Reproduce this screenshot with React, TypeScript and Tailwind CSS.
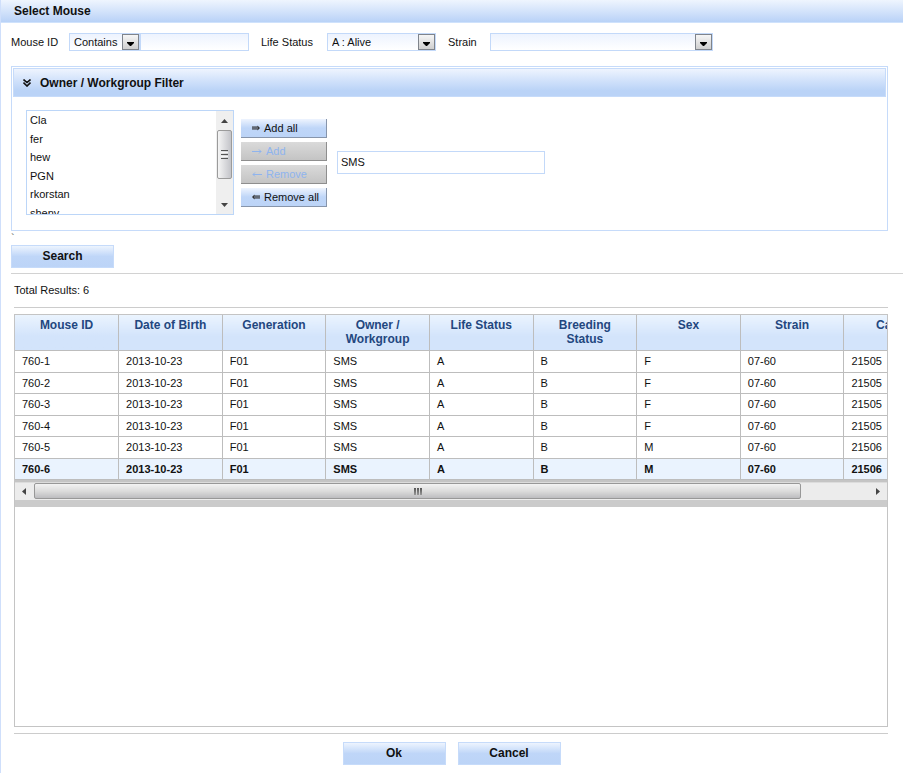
import type { ReactNode } from "react";
import clsx from "clsx";

const columns = [
  "Mouse ID",
  "Date of Birth",
  "Generation",
  "Owner / Workgroup",
  "Life Status",
  "Breeding Status",
  "Sex",
  "Strain",
  "Cage #",
];

const mice = [
  ["760-1", "2013-10-23", "F01", "SMS", "A", "B", "F", "07-60", "21505"],
  ["760-2", "2013-10-23", "F01", "SMS", "A", "B", "F", "07-60", "21505"],
  ["760-3", "2013-10-23", "F01", "SMS", "A", "B", "F", "07-60", "21505"],
  ["760-4", "2013-10-23", "F01", "SMS", "A", "B", "F", "07-60", "21505"],
  ["760-5", "2013-10-23", "F01", "SMS", "A", "B", "M", "07-60", "21506"],
  ["760-6", "2013-10-23", "F01", "SMS", "A", "B", "M", "07-60", "21506"],
];

const selectedMouse = "760-6";

const owners = ["Cla", "fer", "hew", "PGN", "rkorstan", "sheny"];

interface ComboBoxProps {
  id: string;
  label?: string;
  value: string;
  className: string;
}

function ComboBox({ id, label, value, className }: ComboBoxProps) {
  return (
    <div className={clsx("relative h-[18px]", className)}>
      <select
        id={id}
        aria-label={label}
        defaultValue={value}
        className="block h-full w-full appearance-none border border-[#c3d9f9] bg-gradient-to-b from-[#edf3fe] to-white pl-1 outline-none"
      >
        <option>{value}</option>
      </select>
      <span className="pointer-events-none absolute top-px right-px bottom-px flex w-[17px] items-center justify-center border border-[#7f848c] bg-gradient-to-b from-[#f6f6f6] to-[#cfcfcf]">
        <svg width="7" height="4" viewBox="0 0 7 4" className="mt-1">
          <path d="M0 0h7v1L4 4H3L0 1z" fill="#000" />
        </svg>
      </span>
    </div>
  );
}

interface MoveButtonProps {
  disabled?: boolean;
  icon: ReactNode;
  children: ReactNode;
}

function MoveButton({ disabled, icon, children }: MoveButtonProps) {
  return (
    <button
      type="button"
      disabled={disabled}
      className={clsx(
        "flex h-[19px] w-full items-center gap-1 border-r border-b pl-[11px]",
        disabled
          ? "border-[#8e8e8e] bg-gradient-to-b from-[#dadada] to-[#c4c4c4] text-[#8fb4ee]"
          : "border-[#8795ab] bg-gradient-to-b from-[#eef4fe] via-[#bfd6f8] to-[#bcd4f7] text-[#111]"
      )}
    >
      {icon}
      {children}
    </button>
  );
}

function DoubleArrow({ left }: { left?: boolean }) {
  return (
    <svg
      width="8"
      height="6"
      viewBox="0 0 8 6"
      className={clsx("mt-px", left && "rotate-180")}
    >
      <path d="M0 1.5h5.5V.5L8 3L5.5 5.5v-1H0z" fill="#333" />
      <path d="M0 3h6" stroke="#a9bddc" strokeWidth=".8" />
    </svg>
  );
}

function SingleArrow({ left }: { left?: boolean }) {
  return (
    <svg
      width="10"
      height="7"
      viewBox="0 0 10 7"
      className={clsx("mt-px", left && "rotate-180")}
    >
      <path d="M0 3.5h9M7 1.5L9 3.5L7 5.5" stroke="#8fb4ee" fill="none" />
    </svg>
  );
}

function PushButton({ children }: { children: ReactNode }) {
  return (
    <button
      type="button"
      className="h-[23px] w-[103px] border border-[#c6dbfa] bg-gradient-to-b from-[#edf4fe] via-[#bfd6f8] to-[#bcd4f7] pb-px text-xs font-bold text-[#111]"
    >
      {children}
    </button>
  );
}

function ListScrollbar() {
  return (
    <div className="flex w-[17px] flex-col items-center bg-[#efefef]" aria-hidden="true">
      <svg width="7" height="4" viewBox="0 0 7 4" className="mt-2">
        <path d="M3.5 0L7 4H0z" fill="#444" />
      </svg>
      <div className="mt-[7px] flex h-[49px] w-[15px] flex-col items-center justify-center gap-px rounded-xs border border-[#9b9b9b] bg-gradient-to-r from-[#f5f5f5] to-[#c3c4c9]">
        <span className="h-px w-[7px] bg-[#555]" />
        <span className="h-px w-[7px] bg-[#f5f5f5]" />
        <span className="h-px w-[7px] bg-[#555]" />
        <span className="h-px w-[7px] bg-[#f5f5f5]" />
        <span className="h-px w-[7px] bg-[#555]" />
      </div>
      <svg width="7" height="4" viewBox="0 0 7 4" className="mt-auto mb-[7px]">
        <path d="M0 0h7L3.5 4z" fill="#444" />
      </svg>
    </div>
  );
}

function GridScrollbar() {
  return (
    <div
      className="flex h-[18px] items-center border-t border-[#dcdcdc] bg-[#ececec]"
      aria-hidden="true"
    >
      <svg width="4" height="7" viewBox="0 0 4 7" className="mx-[7px]">
        <path d="M4 0v7L0 3.5z" fill="#444" />
      </svg>
      <div className="ml-px flex h-4 w-[88%] items-center justify-center gap-px rounded-xs border border-[#989898] bg-gradient-to-b from-[#f3f3f3] via-[#dcdcdc] to-[#bdbdc0]">
        <span className="h-[7px] w-[2px] bg-gradient-to-b from-[#555] to-[#999]" />
        <span className="h-[7px] w-[2px] bg-gradient-to-b from-[#555] to-[#999]" />
        <span className="h-[7px] w-[2px] bg-gradient-to-b from-[#555] to-[#999]" />
      </div>
      <svg width="4" height="7" viewBox="0 0 4 7" className="mr-[7px] ml-auto">
        <path d="M0 0v7L4 3.5z" fill="#444" />
      </svg>
    </div>
  );
}

function SearchFilters() {
  return (
    <div className="flex items-center">
      <label htmlFor="mouse-id" className="w-[58px]">
        Mouse ID
      </label>
      <ComboBox
        id="mouse-id-match"
        label="Mouse ID match"
        value="Contains"
        className="w-[71px]"
      />
      <input
        id="mouse-id"
        type="text"
        className="h-[18px] w-[109px] border border-[#c3d9f9] bg-gradient-to-b from-[#edf3fe] to-white px-1 outline-none"
      />
      <label htmlFor="life-status" className="ml-3 w-[66px]">
        Life Status
      </label>
      <ComboBox id="life-status" value="A : Alive" className="w-[109px]" />
      <label htmlFor="strain" className="ml-3 w-[42px]">
        Strain
      </label>
      <ComboBox id="strain" value="" className="w-[223px]" />
    </div>
  );
}

function OwnerFilter() {
  return (
    <section className="mr-[15px] border border-[#c6dbfa] p-px">
      <h2 className="flex h-[29px] items-center gap-[9px] border border-[#c6dbfa] bg-gradient-to-b from-[#eef4fe] via-[#d3e3fb] via-40% to-[#bad3f7] to-80% pl-[9px] text-xs font-bold">
        <svg width="8" height="8" viewBox="0 0 8 8" fill="none" stroke="#111">
          <path d="M.5 .5L4 3.5L7.5 .5M.5 3.5L4 7L7.5 3.5" strokeWidth="1.6" />
        </svg>
        Owner / Workgroup Filter
      </h2>
      <div className="flex items-center pt-[13px] pr-3 pb-[14px] pl-[13px]">
        <div className="flex h-[105px] w-[208px] border border-[#bcd6f8]">
          <select
            multiple
            aria-label="Available owners"
            className="h-full min-w-0 flex-1 overflow-hidden bg-white outline-none [scrollbar-width:none]"
          >
            {owners.map((owner) => (
              <option key={owner} className="px-[3px] pt-[3px] pb-[3px] even:pt-1">
                {owner}
              </option>
            ))}
          </select>
          <ListScrollbar />
        </div>
        <div className="ml-[7px] flex w-[86px] flex-col gap-1">
          <MoveButton icon={<DoubleArrow />}>Add all</MoveButton>
          <MoveButton disabled icon={<SingleArrow />}>
            Add
          </MoveButton>
          <MoveButton disabled icon={<SingleArrow left />}>
            Remove
          </MoveButton>
          <MoveButton icon={<DoubleArrow left />}>Remove all</MoveButton>
        </div>
        <select
          multiple
          aria-label="Selected owners"
          className="ml-[10px] h-[23px] w-[208px] overflow-hidden border border-[#c3d9f9] bg-white outline-none [scrollbar-width:none]"
        >
          <option className="px-[3px] py-1">SMS</option>
        </select>
      </div>
    </section>
  );
}

function MouseTable() {
  return (
    <table className="w-[933px] table-fixed">
      <thead>
        <tr>
          {columns.map((column) => (
            <th
              key={column}
              scope="col"
              className="h-[35px] border-r border-b border-[#bdbdbd] bg-gradient-to-b from-[#ebf4fe] to-[#d3e4fb] to-60% px-3 pt-[3px] align-top text-xs leading-[14px] text-[#23477f]"
            >
              {column}
            </th>
          ))}
        </tr>
      </thead>
      <tbody>
        {mice.map((mouse) => (
          <tr
            key={mouse[0]}
            className={clsx(
              "odd:h-[22px] even:h-[21px] last:h-[22px]",
              mouse[0] === selectedMouse && "bg-[#eaf3fe] font-bold"
            )}
          >
            {mouse.map((value, i) => (
              <td key={i} className="border-r border-b border-[#bdbdbd] px-[7px]">
                {value}
              </td>
            ))}
          </tr>
        ))}
      </tbody>
    </table>
  );
}

export default function App() {
  return (
    <main className="flex min-h-screen flex-col overflow-hidden border-l border-[#cfdffb] bg-white font-['Liberation_Sans',Arial,sans-serif] text-[11px] leading-[14px] text-[#111]">
      <h1 className="flex h-[23px] items-center border-b border-[#cfe2fc] bg-gradient-to-b from-[#eff5fe] to-[#b9d2f7] pl-[13px] text-xs font-bold">
        Select Mouse
      </h1>

      <form className="flex flex-1 flex-col pt-[10px] pb-2 pl-[10px]">
        <SearchFilters />
        <div className="mt-[15px]">
          <OwnerFilter />
        </div>
        <span className="h-[14px] text-[#555]">`</span>
        <div>
          <PushButton>Search</PushButton>
        </div>
        <hr className="mt-[5px] border-[#d2d2d2]" />

        <div className="mr-[15px] ml-[3px] flex flex-1 flex-col">
          <p className="mt-[9px]">Total Results: 6</p>
          <hr className="mt-[10px] border-[#cccccc]" />
          <div className="mt-[6px] flex-1 border border-[#c4c4c4]">
            <div className="overflow-hidden">
              <MouseTable />
            </div>
            <div className="h-[2px] bg-[#c4c4c4]" />
            <GridScrollbar />
            <div className="h-[7px] bg-[#cbcbcb]" />
          </div>
          <hr className="mt-[6px] border-[#cccccc]" />
        </div>

        <div className="mt-2 mr-[11px] flex justify-center gap-3">
          <PushButton>Ok</PushButton>
          <PushButton>Cancel</PushButton>
        </div>
      </form>
    </main>
  );
}
